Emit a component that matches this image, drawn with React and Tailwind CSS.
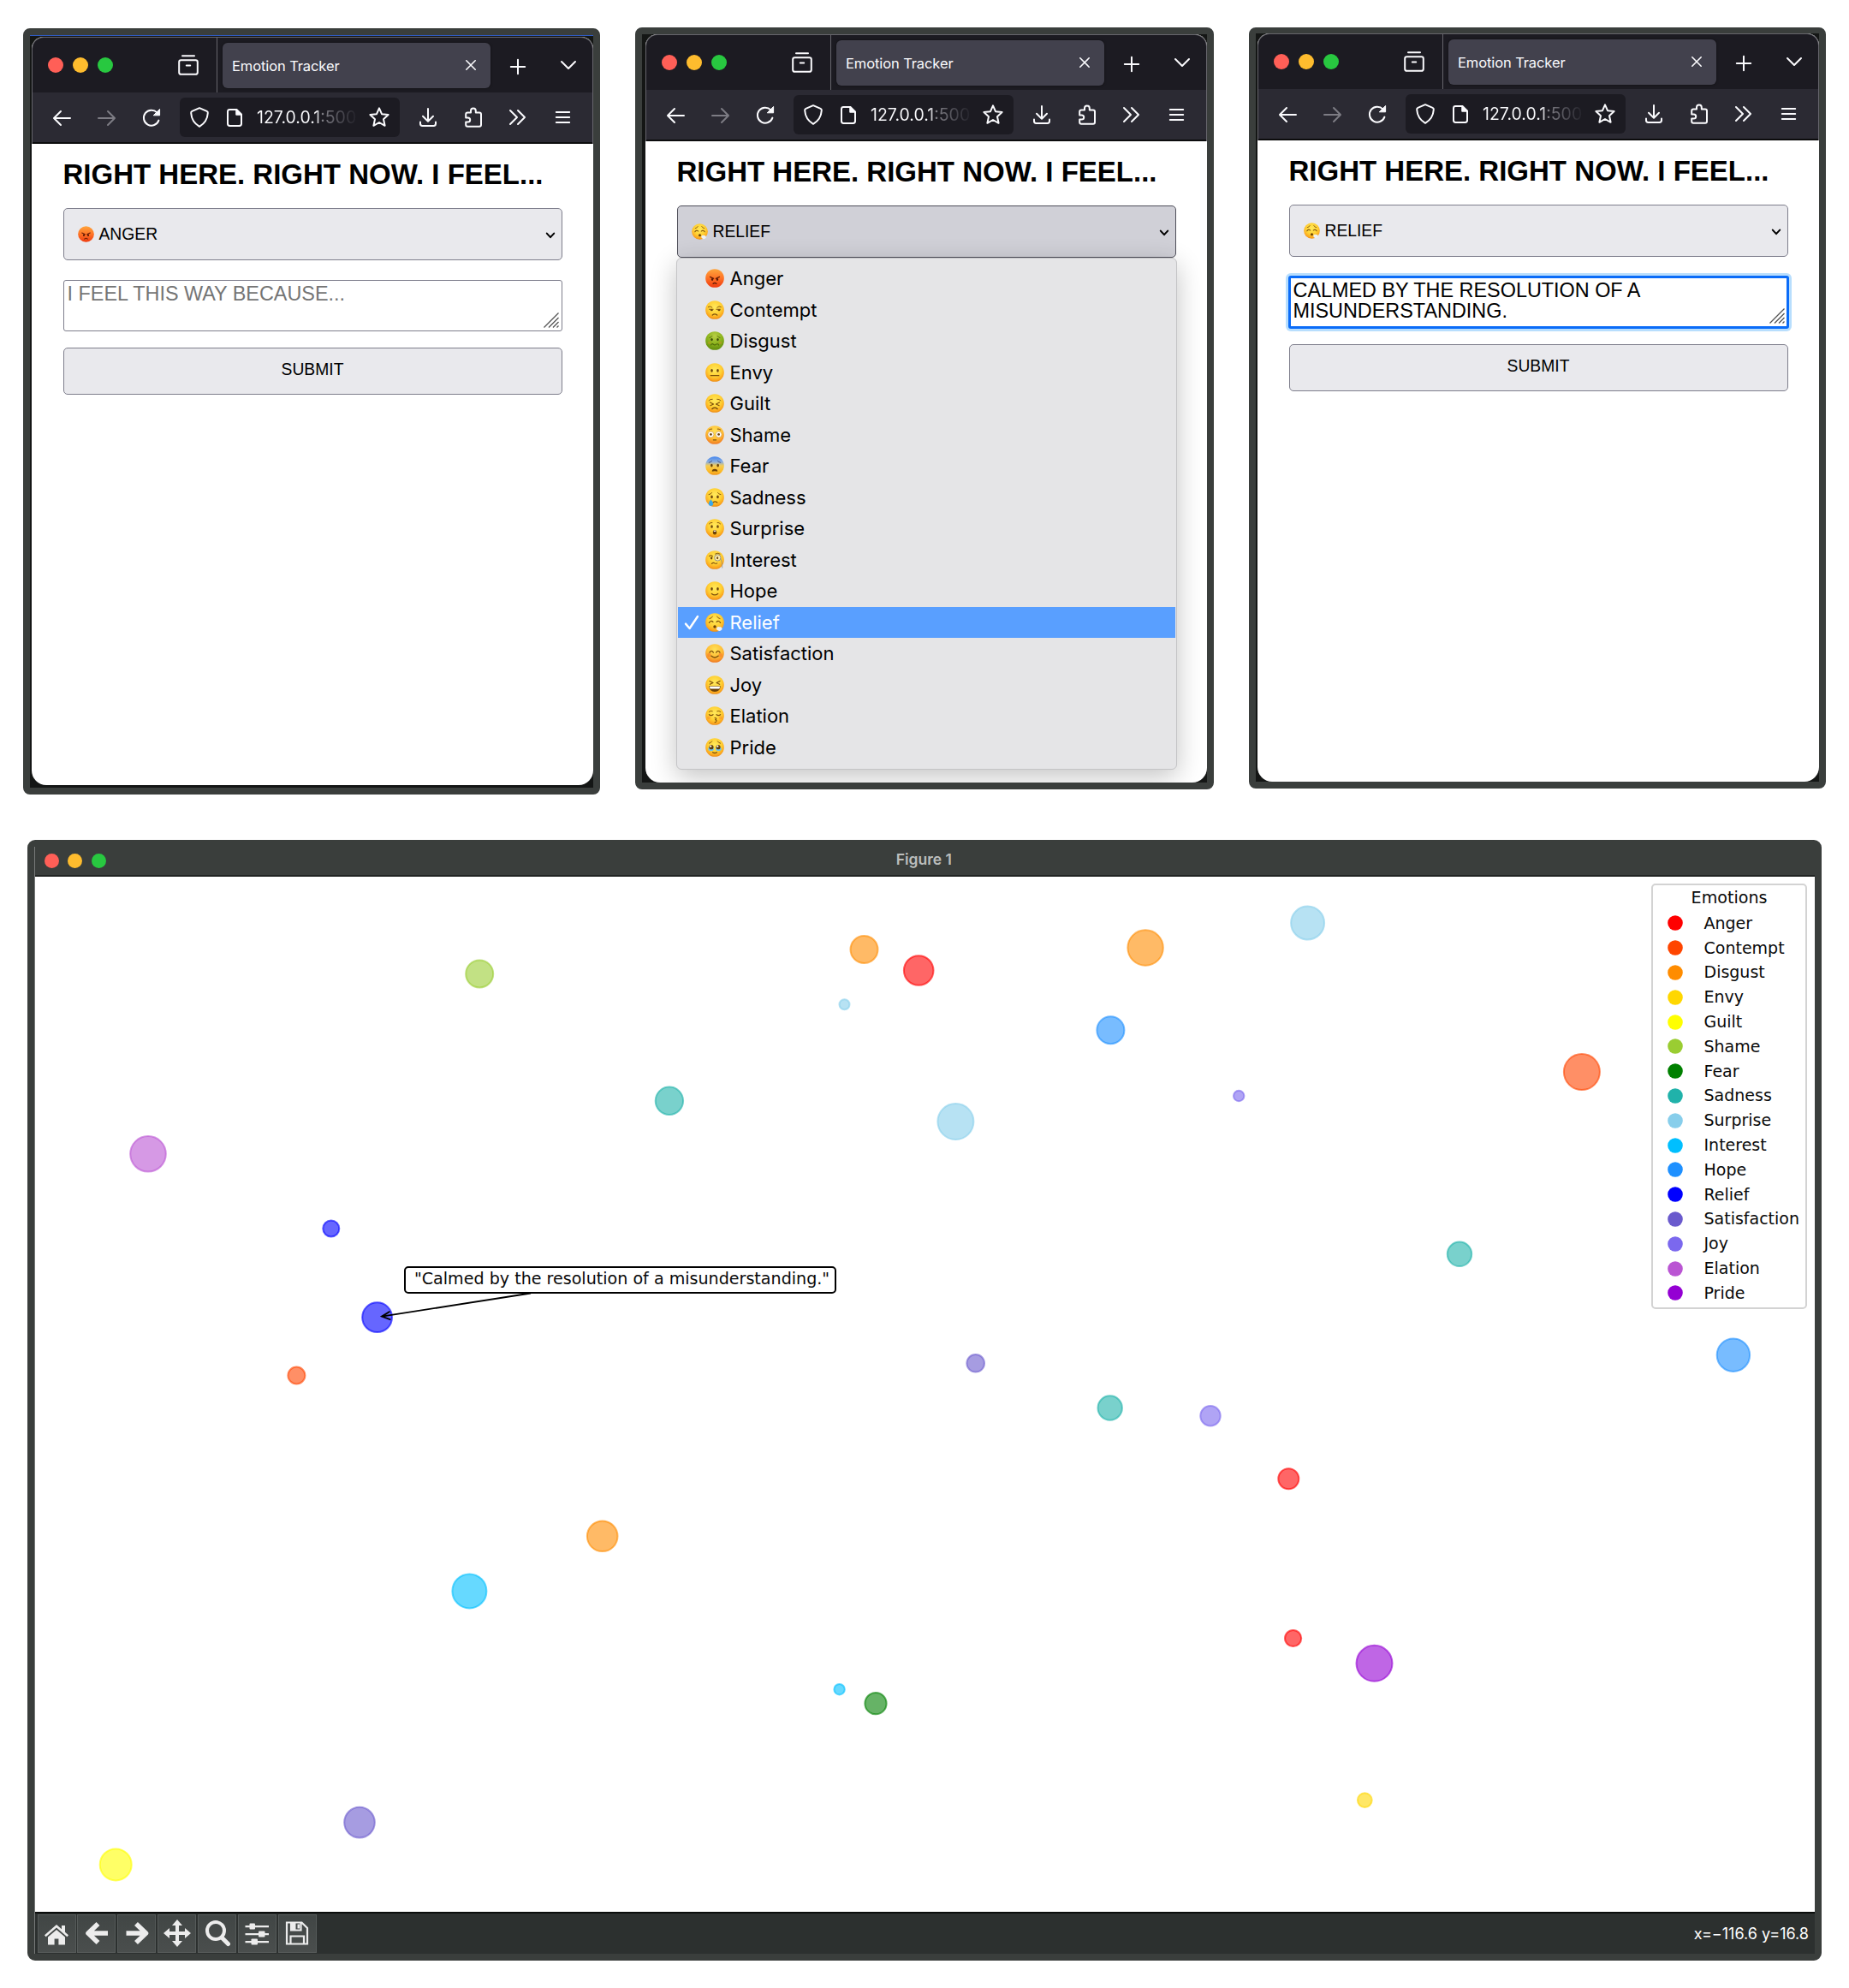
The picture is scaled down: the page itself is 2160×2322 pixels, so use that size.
import React from "react";

const EMOTIONS = [
  ["Anger", "#ff0000"],
  ["Contempt", "#ff4500"],
  ["Disgust", "#ff8c00"],
  ["Envy", "#ffd700"],
  ["Guilt", "#ffff00"],
  ["Shame", "#9acd32"],
  ["Fear", "#008000"],
  ["Sadness", "#20b2aa"],
  ["Surprise", "#87ceeb"],
  ["Interest", "#00bfff"],
  ["Hope", "#1e90ff"],
  ["Relief", "#0000ff"],
  ["Satisfaction", "#6a5acd"],
  ["Joy", "#7b68ee"],
  ["Elation", "#ba55d3"],
  ["Pride", "#9400d3"],
];

const COLORS = Object.fromEntries(EMOTIONS);

const POINTS = [
  ["Shame", 560.2, 1137.4, 16],
  ["Disgust", 1009.5, 1109, 16],
  ["Anger", 1073.2, 1133.5, 17.3],
  ["Surprise", 986.5, 1173.3, 6],
  ["Sadness", 781.9, 1285.8, 16.2],
  ["Elation", 173, 1347.8, 20.8],
  ["Relief", 386.8, 1435, 9.5],
  ["Relief", 440.6, 1538.7, 17.4],
  ["Contempt", 346.4, 1606.5, 10],
  ["Disgust", 703.7, 1794.3, 17.8],
  ["Interest", 548.4, 1858.4, 20],
  ["Satisfaction", 420, 2128.6, 17.8],
  ["Guilt", 135.2, 2177.9, 18.5],
  ["Interest", 980.6, 1973.2, 6.2],
  ["Fear", 1023, 1989.7, 12.6],
  ["Disgust", 1338.1, 1107, 20.7],
  ["Surprise", 1527.6, 1078, 19.5],
  ["Hope", 1297.4, 1203.2, 16],
  ["Joy", 1447.2, 1280, 6.2],
  ["Contempt", 1847.9, 1252, 21],
  ["Surprise", 1116.4, 1310, 21],
  ["Sadness", 1705, 1464.8, 14.2],
  ["Hope", 2024.9, 1582.7, 19.2],
  ["Satisfaction", 1139.7, 1592.3, 10.3],
  ["Sadness", 1296.7, 1644.5, 14.2],
  ["Joy", 1414, 1653.7, 11.7],
  ["Anger", 1505.3, 1727.2, 12],
  ["Anger", 1510.6, 1913.5, 9.6],
  ["Pride", 1605.5, 1942.8, 21],
  ["Envy", 1594.3, 2102.6, 8.4],
];

/* ---------- Emoji faces ---------- */

function Gradients() {
  return (
    <svg className="absolute h-0 w-0" aria-hidden="true">
      <defs>
        <radialGradient id="face-yellow" cx="0.5" cy="0.36" r="0.66">
          <stop offset="0" stopColor="#ffe95c" />
          <stop offset="0.55" stopColor="#ffd033" />
          <stop offset="0.85" stopColor="#fba51e" />
          <stop offset="1" stopColor="#e68510" />
        </radialGradient>
        <linearGradient id="face-red" x1="0" y1="0" x2="0" y2="1">
          <stop offset="0" stopColor="#ffa53c" />
          <stop offset="0.5" stopColor="#ff7326" />
          <stop offset="1" stopColor="#ee3a10" />
        </linearGradient>
        <radialGradient id="face-green" cx="0.5" cy="0.25" r="0.8">
          <stop offset="0" stopColor="#b9cf45" />
          <stop offset="0.5" stopColor="#8cb41e" />
          <stop offset="1" stopColor="#5c880a" />
        </radialGradient>
        <linearGradient id="face-blue" x1="0" y1="0" x2="0" y2="1">
          <stop offset="0" stopColor="#4285f0" />
          <stop offset="0.3" stopColor="#8fb0dc" />
          <stop offset="0.5" stopColor="#f6cd52" />
          <stop offset="0.8" stopColor="#fdbb26" />
          <stop offset="1" stopColor="#f0961a" />
        </linearGradient>
        <radialGradient id="face-flush" cx="0.5" cy="0.3" r="0.7">
          <stop offset="0" stopColor="#ffe257" />
          <stop offset="0.6" stopColor="#ffbd35" />
          <stop offset="1" stopColor="#f07a22" />
        </radialGradient>
      </defs>
    </svg>
  );
}

const dot = (cx, cy, rx = 1.4, ry = 2) => <ellipse cx={cx} cy={cy} rx={rx} ry={ry} fill="#6a430c" />;
const ln = (d, w = 1.3, c = "#7d500c") => (
  <path d={d} fill="none" stroke={c} strokeWidth={w} strokeLinecap="round" strokeLinejoin="round" />
);

const FACES = {
  Anger: (
    <>
      {ln("M6 10.2l4.6 2.2M18 10.2l-4.6 2.2", 1.3, "#6b1d05")}
      <ellipse cx="8.8" cy="13.6" rx="1.3" ry="1.6" fill="#5a1804" />
      <ellipse cx="15.2" cy="13.6" rx="1.3" ry="1.6" fill="#5a1804" />
      {ln("M9.8 19q2.2-2 4.4 0", 1.4, "#6b1d05")}
    </>
  ),
  Contempt: (
    <>
      {ln("M3.6 8.2q2.6-1.8 5 .6M15 8.8q2.4-2.4 5-.6", 1)}
      {ln("M5 11.2h5M14 11.2h5", 1)}
      {dot(8, 12.3, 1.6, 1.1)}
      {dot(17.4, 12.3, 1.6, 1.1)}
      {ln("M9 18.6q3-2.6 6 0", 1.4)}
    </>
  ),
  Disgust: (
    <>
      {ln("M5.4 8.2q2-.4 3.2-2.2M18.6 8.2q-2-.4-3.2-2.2", 1, "#4c6607")}
      <ellipse cx="8.2" cy="10.4" rx="1.3" ry="1.8" fill="#3c4a08" />
      <ellipse cx="15.8" cy="10.4" rx="1.3" ry="1.8" fill="#3c4a08" />
      {ln("M7 17.4q1.6-2.4 3.2-.8t3.6 0 3.2.8", 1.1, "#4c6607")}
      <ellipse cx="5" cy="14.6" rx="2" ry="1.4" fill="#c09a24" opacity=".6" />
      <ellipse cx="19" cy="14.6" rx="2" ry="1.4" fill="#c09a24" opacity=".6" />
    </>
  ),
  Envy: (
    <>
      {dot(8.2, 9.6)}
      {dot(15.8, 9.6)}
      {ln("M6.8 16h10.4", 1.5)}
    </>
  ),
  Guilt: (
    <>
      {ln("M4.4 8.6q2-2.2 4.6-1.8M19.6 8.6q-2-2.2-4.6-1.8", 1)}
      {ln("M6 11l4.4 2L6.4 15M18 11l-4.4 2 4 2", 1.2)}
      {ln("M8.6 19.2q3.4-2.8 6.8 0", 1.5)}
    </>
  ),
  Shame: (
    <>
      {ln("M4.6 5.6q1.6-1.6 3.8-1.2M19.4 5.6q-1.6-1.6-3.8-1.2", 1)}
      <circle cx="7" cy="11.4" r="3.8" fill="#fff" stroke="#b97a1c" strokeWidth=".5" />
      <circle cx="17" cy="11.4" r="3.8" fill="#fff" stroke="#b97a1c" strokeWidth=".5" />
      {dot(7, 11.4, 1.5, 1.5)}
      {dot(17, 11.4, 1.5, 1.5)}
      {ln("M10.2 18.4h3.6", 1.4)}
    </>
  ),
  Fear: (
    <>
      {ln("M4.6 8q2.4-.4 3.6-2M19.4 8q-2.4-.4-3.6-2", 1, "#3c4a78")}
      {dot(8, 11.6)}
      {dot(16, 11.6)}
      <path d="M8.4 19.4q0-3.4 3.6-3.4t3.6 3.4q-3.6-1.4-7.2 0z" fill="#6b4209" />
    </>
  ),
  Sadness: (
    <>
      {ln("M4.4 8.4q2.6-.4 3.8-2.4M19.6 8.4q-2.6-.4-3.8-2.4", 1)}
      {dot(8.2, 11.4)}
      {dot(15.8, 11.4)}
      {ln("M9.8 18.4q2.6-2 5.2 0", 1.4)}
      <path d="M7 14.4q3 3.6 3 5.6a2.8 2.8 0 0 1-5.8 0q0-2 2.8-5.6z" fill="#38a8ec" />
    </>
  ),
  Surprise: (
    <>
      {ln("M4.8 6.4q1.6-2 3.8-1.6M19.2 6.4q-1.6-2-3.8-1.6", 1)}
      {dot(8.2, 9.8)}
      {dot(15.8, 9.8)}
      <ellipse cx="12" cy="17.2" rx="2.4" ry="3" fill="#6b4209" />
      <ellipse cx="12" cy="15.5" rx="1.6" ry=".8" fill="#fff" />
    </>
  ),
  Interest: (
    <>
      {ln("M5 7.2q2-1.8 4.4.2", 1.1)}
      {dot(7.8, 9.6, 1.3, 1.8)}
      <circle cx="15.6" cy="9.2" r="4" fill="#fbe9a6" stroke="#8d8d86" strokeWidth="1" />
      {dot(15.4, 9.6, 1.1, 1.6)}
      {ln("M19.6 10.4q2.4 5 2 11.6", 0.8, "#8d8d86")}
      {ln("M8 16.8q2.2-2 4-.6 1.6 1 3 0", 1.2)}
      {ln("M12.6 4.4q3-2 6 0", 1)}
    </>
  ),
  Hope: (
    <>
      {dot(8.2, 9.6)}
      {dot(15.8, 9.6)}
      {ln("M8 15.8q4 3 8 0", 1.4)}
    </>
  ),
  Relief: (
    <>
      {ln("M5.4 7.2q2.8-.4 3.8-2.8M18.6 7.2q-2.8-.4-3.8-2.8", 1)}
      {ln("M4.8 12.4q2.2-3.6 5-1M19.2 12.4q-2.2-3.6-5-1", 1.3)}
      <circle cx="12" cy="17.4" r="1.9" fill="#6b4209" />
      <path
        d="M14.2 19.4q1.4-2.6 3.6-1.6 2.6-.6 3.2 1.4 1.2 2-1 2.8-1.2 1.4-3.2.6-2.8-.6-2.6-3.2z"
        fill="#eef1f4"
      />
    </>
  ),
  Satisfaction: (
    <>
      {ln("M5.4 11q2.4-3.8 4.8 0M13.8 11q2.4-3.8 4.8 0", 1.4)}
      <circle cx="4.8" cy="14.2" r="2.4" fill="#f5752a" opacity=".55" />
      <circle cx="19.2" cy="14.2" r="2.4" fill="#f5752a" opacity=".55" />
      {ln("M7.4 15.4q4.6 4.2 9.2 0", 1.5)}
    </>
  ),
  Joy: (
    <>
      {ln("M5.4 7l4.4 2.2-4 2M18.6 7l-4.4 2.2 4 2", 1.3)}
      <path d="M4.6 13.4h14.8q-.4 7.4-7.4 7.4t-7.4-7.4z" fill="#6b4209" />
      <path d="M5.4 14h13.2q-.2 2.4-.8 3H6.2q-.6-.6-.8-3z" fill="#fff" />
    </>
  ),
  Elation: (
    <>
      {ln("M4.6 7q2-2 4.4-.8M19.4 7q-2-2-4.4-.8", 1)}
      {ln("M4.8 10.6q2.6 2 5 0M14.2 10.6q2.4 2 5 0", 1.3)}
      {ln("M12 14.8q3 .2 1.6 1.8l-1 .6q2.8.2 1 2.6-.6.6-1.6.6", 1.1)}
      <circle cx="4.6" cy="14.4" r="2.2" fill="#f5752a" opacity=".35" />
      <circle cx="19.4" cy="14.4" r="2.2" fill="#f5752a" opacity=".35" />
    </>
  ),
  Pride: (
    <>
      {ln("M4.8 6.8q2.6-.6 3.6-2.6M19.2 6.8q-2.6-.6-3.6-2.6", 1)}
      <ellipse cx="7.2" cy="14" rx="3.6" ry="2.6" fill="#6cc4f2" />
      <ellipse cx="16.8" cy="14" rx="3.6" ry="2.6" fill="#6cc4f2" />
      <circle cx="7.6" cy="11.6" r="2.8" fill="#5d3b0d" />
      <circle cx="16.4" cy="11.6" r="2.8" fill="#5d3b0d" />
      <circle cx="6.8" cy="10.6" r="1.2" fill="#fff" />
      <circle cx="15.6" cy="10.6" r="1.2" fill="#fff" />
      {ln("M9.4 18.2q2.6 1.8 5.2 0", 1.4)}
    </>
  ),
};

const FILLS = {
  Anger: "url(#face-red)",
  Disgust: "url(#face-green)",
  Fear: "url(#face-blue)",
  Shame: "url(#face-flush)",
  Satisfaction: "url(#face-flush)",
};

function Face({ name, className }) {
  return (
    <svg viewBox="0 0 24 24" className={className} aria-hidden="true">
      <circle cx="12" cy="12" r="11.8" fill={FILLS[name] || "url(#face-yellow)"} />
      {FACES[name]}
    </svg>
  );
}

/* ---------- Browser chrome ---------- */

function Ico({ w, h, className = "", sw = 2, children }) {
  return (
    <svg
      width={w}
      height={h}
      viewBox={`0 0 ${w} ${h}`}
      className={`shrink-0 overflow-visible ${className}`}
      fill="none"
      stroke="currentColor"
      strokeWidth={sw}
      strokeLinecap="round"
      strokeLinejoin="round"
      aria-hidden="true"
    >
      {children}
    </svg>
  );
}

function BrowserChrome() {
  return (
    <div className="h-[125px] overflow-hidden rounded-t-[14px] border-x border-t border-[#66656c] bg-[#1c1b22] text-[#fbfbfe]">
      <div className="flex h-16 items-center">
        <div className="ml-[18px] flex gap-[11px]">
          <span className="h-[18px] w-[18px] rounded-full bg-[#ff5f57]" />
          <span className="h-[18px] w-[18px] rounded-full bg-[#febc2e]" />
          <span className="h-[18px] w-[18px] rounded-full bg-[#28c840]" />
        </div>
        <Ico w={24} h={24} className="ml-[76px]">
          <path d="M5 1.2h14" />
          <path d="M3.4 6.2h17.2q2.2 0 2.2 2.2v12q0 2.400-2.400 2.400H3.600q-2.400 0-2.400-2.400v-12q0-2.200 2.200-2.200z" />
          <path d="M9.800 12.400h4.400" />
        </Ico>
        <div className="ml-[21px] h-full w-px bg-[#66656c]" />
        <div className="ml-[6px] flex h-[53px] w-[313px] items-center justify-between rounded-[6px] bg-[#42414d] pl-[11px] pr-[17px] shadow-[0_0_3px_rgba(0,0,0,0.5)]">
          <span className="mt-[2px] font-['Inter'] text-[16.5px] leading-6 tracking-[-0.1px]">Emotion Tracker</span>
          <Ico w={12} h={12} sw={1.6}>
            <path d="M.8.8l10.4 10.4M11.2.8L.8 11.2" />
          </Ico>
        </div>
        <Ico w={18} h={18} className="ml-[23px] mt-[3px]">
          <path d="M9 .8v16.4M.8 9h16.4" />
        </Ico>
        <Ico w={18} h={10} className="ml-[41px]">
          <path d="M1 1l8 8 8-8" />
        </Ico>
      </div>
      <div className="flex h-[60px] items-center border-b-2 border-[#0c0c0d] bg-[#2b2a33]">
        <Ico w={21} h={18} className="ml-[24px] mt-px">
          <path d="M20 9H1.2M9 1L1 9l8 8" />
        </Ico>
        <Ico w={21} h={18} className="ml-[31px] mt-px text-[#7d7c84]">
          <path d="M1 9h18.8M12 1l8 8-8 8" />
        </Ico>
        <Ico w={22} h={21} className="ml-[31px] mt-px">
          <path d="M19.4 13.6A9 9 0 1 1 17.400 4.400L19.400 6.400" />
          <path d="M20.600.8v7h-7z" fill="currentColor" strokeWidth="1" />
        </Ico>
        <div className="ml-[22px] flex h-[46px] w-[257px] items-center rounded-[6px] bg-[#1c1b22]">
          <Ico w={22} h={24} className="ml-[12px]">
            <path d="M11 1.2L19.6 4.8Q21 5.4 20.8 7 20.2 17.4 11 22.8 1.8 17.4 1.2 7 1 5.4 2.4 4.8z" />
          </Ico>
          <Ico w={18} h={21} className="ml-[21px]">
            <path d="M3.4 1h7.8l5.8 5.8v10.8q0 2.4-2.4 2.4H3.4Q1 20 1 17.6V3.4Q1 1 3.4 1z" />
            <path d="M11.2 1v5.8H17z" fill="currentColor" />
          </Ico>
          <div className="ml-[17px] w-[123px]">
            <span className="whitespace-nowrap bg-gradient-to-r from-[#fbfbfe] from-60% via-[#8a8990] via-[64%] to-[#24232b] bg-clip-text font-['Inter'] text-[19.5px] leading-7 text-transparent">
              127.0.0.1:500
            </span>
          </div>
          <Ico w={24} h={24} className="ml-[8px]">
            <path d="M12 1.4l3 6.8 7.6.8-5.6 5.2 1.6 7.6-6.6-3.800-6.600 3.800 1.600-7.600L1.400 9l7.600-.8z" />
          </Ico>
        </div>
        <Ico w={20} h={22} className="ml-[23px]">
          <path d="M10 1v14.4M4 9.800l6 6 6-6M1 16.600v2q0 2.400 2.400 2.400h13.200q2.400 0 2.400-2.400v-2" />
        </Ico>
        <Ico w={20} h={24} className="ml-[33px]">
          <path d="M1.2 12.400V8.600Q1.200 6.600 3.200 6.600H7V4.400a2.900 2.900 0 0 1 5.800 0v2.200h4.200q2 0 2 2v12.200q0 2-2 2H3.200q-2 0-2-2v-3.200h2.400a2.600 2.600 0 0 0 0-5.200z" />
        </Ico>
        <Ico w={19} h={18} className="ml-[32px]">
          <path d="M1 1l8 8-8 8M10 1l8 8-8 8" />
        </Ico>
        <Ico w={17} h={14} className="ml-[35px] -mt-px">
          <path d="M.8 1h15.4M.8 7h15.4M.8 13h15.4" />
        </Ico>
      </div>
    </div>
  );
}

function EmotionForm({ selected, open, text }) {
  const selectTone = open ? "border-[#4f4f5a] bg-[#d0d0d7]" : "border-[#7e7e8c] bg-[#e9e9ed]";
  const areaTone = text
    ? "-mx-px -mt-px mb-[-1px] h-[62px] border-[3px] border-[#0a6cf8] px-[3px] pt-[2px] text-black shadow-[0_0_0_3px_#b8defd]"
    : "h-[60px] border border-[#7e7e8c] px-[4px] pt-[3px] text-[#757575]";
  return (
    <div className="flex flex-col px-[36.5px] pt-[18px] font-['Liberation_Sans',sans-serif] text-black">
      <h1 className="whitespace-nowrap text-[33px] font-bold leading-9">RIGHT HERE. RIGHT NOW. I FEEL...</h1>
      <div className={`mt-[21px] flex h-[61px] items-center rounded-[5px] border pl-[16px] pr-[8px] ${selectTone}`}>
        <Face name={selected} className="h-[19px] w-[19px]" />
        <span className="ml-[6px] grow text-[19.3px] uppercase leading-6">{selected}</span>
        <Ico w={10} h={6} className="mt-[2px]">
          <path d="M.8.6L5 5.2 9.2.6" />
        </Ico>
      </div>
      {open ? (
        <EmotionMenu selected={selected} />
      ) : (
        <>
          <div className="mt-[23px]">
            <div className={`flex justify-between rounded-[3px] bg-white text-[23.4px] leading-6 ${areaTone}`}>
              <p className="w-[540px] uppercase">{text || "I feel this way because..."}</p>
              <Ico w={18} h={18} sw={1.3} className="mb-[3px] -mr-px self-end text-[#555]">
                <path d="M.5 17.5l17-17M6 17.5L17.5 6M11 17.5l6.5-6.5M15.5 17.5l2-2" strokeLinecap="butt" />
              </Ico>
            </div>
          </div>
          <div className="mt-[19px] flex h-[55px] items-center justify-center rounded-[5px] border border-[#7e7e8c] bg-[#e9e9ed] pb-[3px] text-[19.3px]">
            SUBMIT
          </div>
        </>
      )}
    </div>
  );
}

function EmotionMenu({ selected }) {
  return (
    <ul className="-mx-px flex flex-col rounded-[6px] border border-[#c4c4c6] bg-[#e5e5e7] pb-[7px] pt-[5px] font-['Inter'] shadow-[0_8px_30px_rgba(0,0,0,0.24)]">
      {EMOTIONS.map(([name]) => {
        const active = name === selected;
        return (
          <li
            key={name}
            className={`mx-px flex h-[36.5px] items-center text-[22px] leading-7 ${active ? "bg-[#599fff] text-white" : "text-black"}`}
          >
            <span className="flex w-[32px] pl-[8px]">
              {active && (
                <Ico w={16} h={16} sw={2.4}>
                  <path d="M1 9.6L5.6 15 15 1" />
                </Ico>
              )}
            </span>
            <Face name={name} className="h-[22px] w-[22px]" />
            <span className="ml-[7px]">{name}</span>
          </li>
        );
      })}
    </ul>
  );
}

/* ---------- Plot window ---------- */

function ToolButton({ children }) {
  return (
    <span className="flex h-[45px] w-[45px] items-center justify-center border border-[#565b5a] bg-gradient-to-b from-[#414645] to-[#4a4e4d] pb-px text-[#ececec]">
      <svg viewBox="0 0 32 32" className="h-8 w-8" fill="currentColor" stroke="none" aria-hidden="true">
        {children}
      </svg>
    </span>
  );
}

function Toolbar() {
  return (
    <div className="flex h-[49px] items-center justify-between border-t-2 border-[#0b0d0c] bg-[#2c302f] pl-[2.5px] pr-[7px]">
      <div className="flex gap-[1.9px]">
        <ToolButton>
          <path d="M16 6L2 18.200l1.600 2L16 9.600l12.400 10.600 1.600-2-4-3.500V7h-4v4.200z" />
          <path d="M16 12L6 20.600V29.500h7.600v-7h4.800v7H26v-8.900z" />
        </ToolButton>
        <ToolButton>
          <path d="M17.500 5L6 16l11.500 11M8 16h21" fill="none" stroke="currentColor" strokeWidth="5.600" strokeLinejoin="round" />
        </ToolButton>
        <ToolButton>
          <path d="M15 5l11.500 11L15 27M25 16H3.500" fill="none" stroke="currentColor" strokeWidth="5.600" strokeLinejoin="round" />
        </ToolButton>
        <ToolButton>
          <path d="M16 0l6 7h-4v7h7v-4l7 6-7 6v-4h-7v7h4l-6 7-6-7h4v-7H7v4l-7-6 7-6v4h7V7h-4z" />
        </ToolButton>
        <ToolButton>
          <circle cx="14" cy="13" r="10" fill="none" stroke="currentColor" strokeWidth="4" />
          <path d="M21 21l7.500 7.500" fill="none" stroke="currentColor" strokeWidth="5" strokeLinecap="round" />
        </ToolButton>
        <ToolButton>
          <path d="M2.500 7h27.500v2.200H2.500zM2.500 16h27.500v2.200H2.500zM2.500 25h27.500v2.200H2.500z" />
          <rect x="7.500" y="4.600" width="6.500" height="7" rx="1" />
          <rect x="18" y="13.600" width="7.500" height="7" rx="1" />
          <rect x="9.500" y="22.600" width="7.500" height="7" rx="1" />
        </ToolButton>
        <ToolButton>
          <path
            d="M4 3.500h17.500l6.500 6.500v18.500H4zM8.500 28V19.500H24V28M9 4V12.500h11.500V4"
            fill="none"
            stroke="currentColor"
            strokeWidth="2.200"
          />
          <path d="M9 4h5.500v8.500H9zM16.500 5.500h2.500v5h-2.500z" />
        </ToolButton>
      </div>
      <span className="font-['Inter'] text-[18px] text-white">x=−116.6 y=16.8</span>
    </div>
  );
}

function PlotArea() {
  return (
    <div className="relative h-[1209px] bg-white font-['DejaVu_Sans',sans-serif] text-[#0a0a0a]">
      <svg viewBox="41 1024 2079 1209" className="block h-full w-full" aria-hidden="true">
        {POINTS.map(([name, x, y, r]) => (
          <circle
            key={`${name}-${x}`}
            cx={x}
            cy={y}
            r={r}
            fill={COLORS[name]}
            stroke={COLORS[name]}
            strokeWidth="2"
            fillOpacity=".6"
            strokeOpacity=".6"
          />
        ))}
        <path
          d="M620 1510.5L446 1537.6M455.5 1531.8L446 1537.6 456.4 1541.4"
          fill="none"
          stroke="#000"
          strokeWidth="1.9"
        />
      </svg>
      <div className="absolute left-[431px] top-[455px] flex h-[32px] w-[505px] items-center whitespace-nowrap rounded-[5px] border-2 border-black bg-white pl-[10px] text-[19.1px]">
        <span className="-mt-[2px]">"Calmed by the resolution of a misunderstanding."</span>
      </div>
      <div className="absolute left-[1888px] top-[8px] flex h-[497px] w-[182px] flex-col rounded-[5px] border-2 border-[#d3d3d3] bg-white">
        <div className="flex h-[30px] items-center justify-center text-[19.1px] leading-none">Emotions</div>
        {EMOTIONS.map(([name, color]) => (
          <div key={name} className="flex h-[28.8px] shrink-0 items-center text-[19px] leading-none">
            <svg viewBox="0 0 18 18" className="ml-[17px] h-[18px] w-[18px] shrink-0">
              <circle cx="9" cy="9" r="8.8" fill={color} />
            </svg>
            <span className="ml-[24.5px]">{name}</span>
          </div>
        ))}
      </div>
    </div>
  );
}

function PlotWindow() {
  return (
    <section className="ml-[32px] mt-[53px] h-[1309px] w-[2096px] rounded-[9px] bg-[#3a3e3c] p-2">
      <div className="border-l border-[#777a79]">
        <div className="flex h-[35px] items-center border-b-2 border-[#212423]">
          <div className="-mt-px ml-[10.5px] flex w-[100px] gap-[10.5px]">
            <span className="h-[17px] w-[17px] rounded-full bg-[#ff5f57]" />
            <span className="h-[17px] w-[17px] rounded-full bg-[#febc2e]" />
            <span className="h-[17px] w-[17px] rounded-full bg-[#28c840]" />
          </div>
          <span className="-mt-[2px] grow pr-[113px] text-center font-['Inter'] text-[17.5px] font-semibold text-[#bcbebd]">
            Figure 1
          </span>
        </div>
        <PlotArea />
        <Toolbar />
      </div>
    </section>
  );
}

/* ---------- Page ---------- */

export default function App() {
  return (
    <main className="h-[2322px] w-[2160px] overflow-hidden bg-white">
      <Gradients />
      <div className="flex h-[928px] items-start">
        <section className="ml-[27px] mt-[33px] h-[895px] w-[674px] rounded-[8px] border-8 border-[#3a3e3c] bg-[#141615] pl-[2px]">
          <div className="-ml-[2px] h-[2px] border-t border-[#2f5bc4]" />
          <div className="h-[874px] overflow-hidden rounded-b-[17px] rounded-t-[14px] bg-white">
            <BrowserChrome />
            <EmotionForm selected="Anger" />
          </div>
        </section>
        <section className="ml-[41px] mt-[32px] h-[890px] w-[676px] rounded-[8px] border-8 border-[#3a3e3c] bg-[#141615] pl-[4px]">
          <div className="h-[874px] overflow-hidden rounded-b-[17px] rounded-t-[14px] bg-white">
            <BrowserChrome />
            <EmotionForm selected="Relief" open />
          </div>
        </section>
        <section className="ml-[41px] mt-[32px] h-[889px] w-[674px] rounded-[8px] border-8 border-t-[7px] border-[#3a3e3c] bg-[#141615] pl-[2px]">
          <div className="h-[874px] overflow-hidden rounded-b-[17px] rounded-t-[14px] bg-white">
            <BrowserChrome />
            <EmotionForm selected="Relief" text="Calmed by the resolution of a misunderstanding." />
          </div>
        </section>
      </div>
      <PlotWindow />
    </main>
  );
}
